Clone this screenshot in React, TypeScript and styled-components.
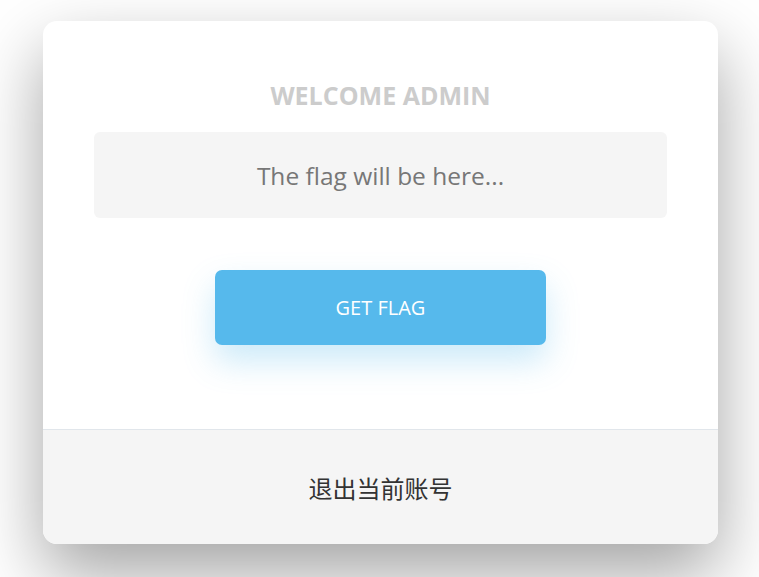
import React from "react";
import styled, { createGlobalStyle } from "styled-components";

const Global = createGlobalStyle`
  html, body { margin: 0; padding: 0; background: #ffffff; }
  body { font-family: "Open Sans", "Noto Sans CJK SC", sans-serif; }
`;

const Page = styled.div`
  display: flex;
  justify-content: flex-start;
  padding: 21px 0 0 43px;
  min-height: 577px;
  box-sizing: border-box;
`;

const Card = styled.div`
  width: 675px;
  height: 523px;
  background: #ffffff;
  border-radius: 14px;
  box-shadow: 0 30px 70px rgba(0, 0, 0, 0.36);
  display: flex;
  flex-direction: column;
  overflow: hidden;
`;

const Main = styled.div`
  flex: 1;
  display: flex;
  flex-direction: column;
  align-items: center;
  padding: 59px 51px 0;
`;

const Title = styled.h1`
  margin: 0;
  font-size: 25px;
  line-height: 30px;
  font-weight: 700;
  color: #cccccc;
  letter-spacing: 0;
`;

const FlagBox = styled.div`
  margin-top: 22px;
  width: 100%;
  height: 86px;
  background: #f5f5f5;
  border-radius: 6px;
  display: flex;
  align-items: center;
  justify-content: center;
  font-size: 24.5px;
  color: #777777;
`;

const Button = styled.button`
  margin-top: 52px;
  width: 331px;
  height: 75px;
  border: none;
  border-radius: 7px;
  background: #56b9ec;
  color: #ffffff;
  font-family: "Open Sans", sans-serif;
  font-size: 20px;
  box-shadow: 0 16px 32px rgba(86, 185, 236, 0.3);
  cursor: pointer;
`;

const Footer = styled.div`
  height: 114px;
  border-top: 1px solid #e1e6eb;
  background: #f5f5f5;
  display: flex;
  align-items: center;
  justify-content: center;
  font-family: "Noto Sans CJK SC", sans-serif;
  font-size: 24px;
  color: #333333;
`;

export default function App() {
  return (
    <>
      <Global />
      <Page>
        <Card>
          <Main>
            <Title>WELCOME ADMIN</Title>
            <FlagBox>The flag will be here...</FlagBox>
            <Button>GET FLAG</Button>
          </Main>
          <Footer>退出当前账号</Footer>
        </Card>
      </Page>
    </>
  );
}
